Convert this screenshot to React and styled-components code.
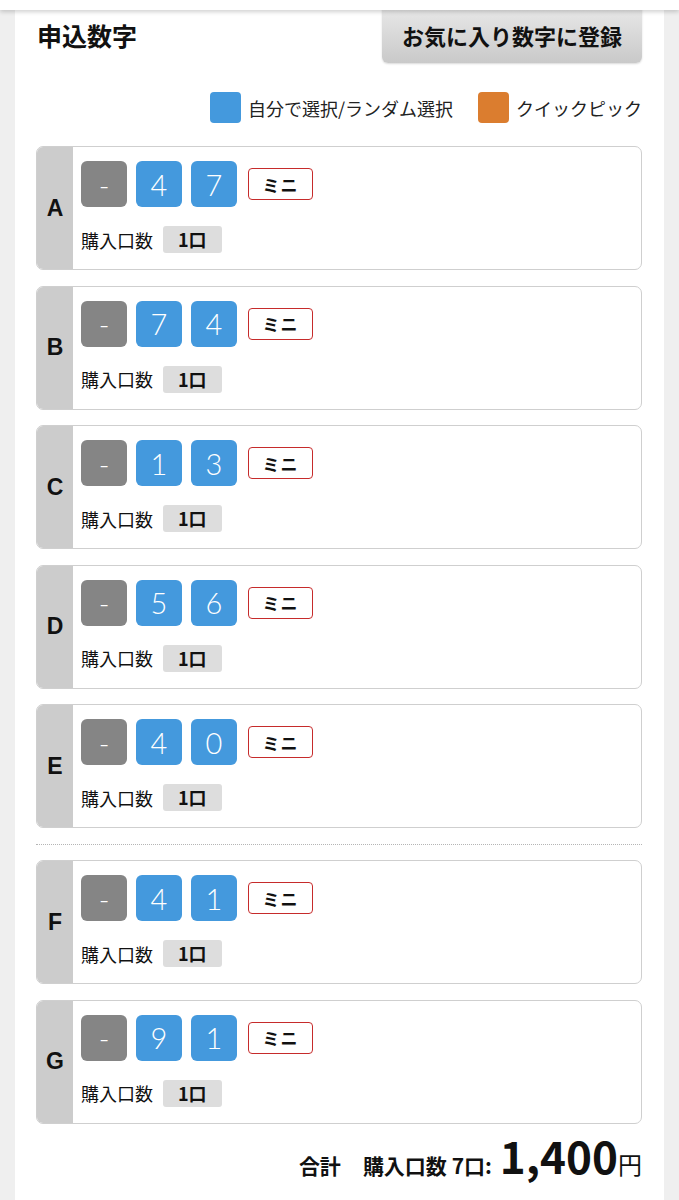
import React from "react";
import styled, { createGlobalStyle } from "styled-components";

const GlobalStyle = createGlobalStyle`
  html, body {
    margin: 0;
    padding: 0;
    background: #efefef;
  }
  body {
    font-family: "Noto Sans CJK JP", "Noto Sans", sans-serif;
    color: #111;
  }
`;

const TopStrip = styled.div`
  position: relative;
  z-index: 2;
  height: 10px;
  background: #fff;
  box-shadow: 0 2px 4px rgba(0, 0, 0, 0.18);
`;

const Panel = styled.div`
  margin: 0 15px;
  background: #fff;
  padding: 0 22px 25px 21px;
  border-bottom: 2px solid #dcdcdc;
`;

const HeaderRow = styled.div`
  display: flex;
  justify-content: space-between;
  align-items: flex-start;
`;

const Title = styled.h1`
  margin: 11px 0 0 1px;
  font-size: 25px;
  line-height: 28px;
  font-weight: 700;
`;

const FavButton = styled.button`
  margin-top: -10px;
  width: 260px;
  height: 63px;
  padding: 6px 0 0;
  border: none;
  border-radius: 6px;
  background: linear-gradient(#ececec, #c9c9c9);
  box-shadow: 0 1px 2px rgba(0, 0, 0, 0.15);
  font-family: inherit;
  font-size: 22px;
  font-weight: 700;
  color: #111;
`;

const Legend = styled.div`
  display: flex;
  justify-content: flex-end;
  align-items: center;
  gap: 25px;
  margin-top: 29px;
`;

const LegendItem = styled.div`
  display: flex;
  align-items: center;
  gap: 7px;
  font-size: 18px;
  color: #222;
`;

const Swatch = styled.span`
  width: 31px;
  height: 31px;
  border-radius: 4px;
  background: ${(p) => p.$color};
`;

const List = styled.div`
  display: flex;
  flex-direction: column;
  gap: 15.5px;
  margin-top: 23px;
`;

const Separator = styled.div`
  border-top: 1px dotted #b5b5b5;
  margin: 0;
`;

const Card = styled.div`
  display: flex;
  border: 1.5px solid #cfcfcf;
  border-radius: 7px;
  overflow: hidden;
  height: 124px;
  box-sizing: border-box;
`;

const Letter = styled.div`
  width: 36px;
  flex: none;
  background: #cccccc;
  display: flex;
  align-items: center;
  justify-content: center;
  font-family: "Liberation Sans", sans-serif;
  font-size: 23px;
  font-weight: 700;
`;

const Body = styled.div`
  padding: 14px 0 0 8px;
  display: flex;
  flex-direction: column;
  gap: 19px;
`;

const NumberRow = styled.div`
  display: flex;
  align-items: center;
  gap: 9px;
`;

const NumBox = styled.div`
  width: 46px;
  height: 46px;
  border-radius: 6px;
  background: ${(p) => (p.$blank ? "#858585" : "#4499dd")};
  color: #fff;
  display: flex;
  align-items: center;
  justify-content: center;
  font-family: "Lato", "Open Sans", sans-serif;
  font-weight: 300;
  font-size: 29px;
`;

const MiniBadge = styled.div`
  margin-left: 2px;
  width: 65px;
  height: 32px;
  box-sizing: border-box;
  border: 1.5px solid #c62b2b;
  border-radius: 4px;
  display: flex;
  align-items: center;
  justify-content: center;
  font-size: 17px;
  font-weight: 700;
  letter-spacing: 1px;
`;

const CountRow = styled.div`
  display: flex;
  align-items: center;
  gap: 10px;
  font-size: 18px;
`;

const CountChip = styled.span`
  background: #dddddd;
  border-radius: 3px;
  padding: 0 15px;
  height: 27px;
  line-height: 27px;
  font-weight: 700;
  font-size: 18px;
`;

const TotalRow = styled.div`
  display: flex;
  justify-content: flex-end;
  align-items: baseline;
  margin-top: 6px;
  font-weight: 700;
  font-size: 21px;
`;

const TotalLabel = styled.span`
  margin-right: 22px;
`;

const Amount = styled.span`
  margin-left: 8px;
  font-size: 44px;
  line-height: 50px;
`;

const Yen = styled.span`
  font-size: 24px;
  font-weight: 400;
`;

const tickets = [
  ["A", "4", "7"],
  ["B", "7", "4"],
  ["C", "1", "3"],
  ["D", "5", "6"],
  ["E", "4", "0"],
  ["F", "4", "1"],
  ["G", "9", "1"],
];

const Ticket = ({ label, a, b }) => (
  <Card>
    <Letter>{label}</Letter>
    <Body>
      <NumberRow>
        <NumBox $blank>-</NumBox>
        <NumBox>{a}</NumBox>
        <NumBox>{b}</NumBox>
        <MiniBadge>ミニ</MiniBadge>
      </NumberRow>
      <CountRow>
        購入口数<CountChip>1口</CountChip>
      </CountRow>
    </Body>
  </Card>
);

export default function App() {
  return (
    <>
      <GlobalStyle />
      <TopStrip />
      <Panel>
        <HeaderRow>
          <Title>申込数字</Title>
          <FavButton>お気に入り数字に登録</FavButton>
        </HeaderRow>
        <Legend>
          <LegendItem>
            <Swatch $color="#4499dd" />
            自分で選択/ランダム選択
          </LegendItem>
          <LegendItem>
            <Swatch $color="#db7d2f" />
            クイックピック
          </LegendItem>
        </Legend>
        <List>
          {tickets.map(([l, a, b]) => (
            <React.Fragment key={l}>
              {l === "F" && <Separator />}
              <Ticket label={l} a={a} b={b} />
            </React.Fragment>
          ))}
        </List>
        <TotalRow>
          <TotalLabel>合計</TotalLabel>
          購入口数 7口:
          <Amount>1,400</Amount>
          <Yen>円</Yen>
        </TotalRow>
      </Panel>
    </>
  );
}
